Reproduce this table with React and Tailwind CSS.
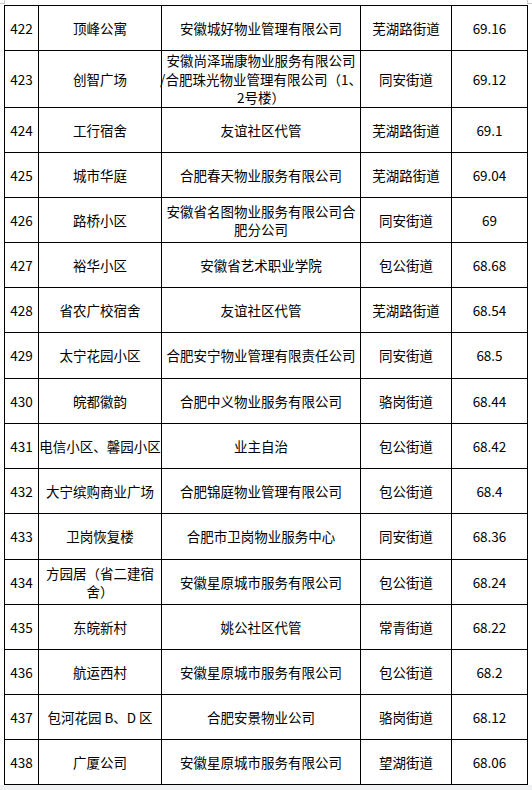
import React from "react";

const rows = [
  ["422", "顶峰公寓", "安徽城好物业管理有限公司", "芜湖路街道", "69.16"],
  ["423", "创智广场", ["安徽尚泽瑞康物业服务有限公司", "/合肥珠光物业管理有限公司（1、", "2号楼）"], "同安街道", "69.12"],
  ["424", "工行宿舍", "友谊社区代管", "芜湖路街道", "69.1"],
  ["425", "城市华庭", "合肥春天物业服务有限公司", "芜湖路街道", "69.04"],
  ["426", "路桥小区", ["安徽省名图物业服务有限公司合", "肥分公司"], "同安街道", "69"],
  ["427", "裕华小区", "安徽省艺术职业学院", "包公街道", "68.68"],
  ["428", "省农广校宿舍", "友谊社区代管", "芜湖路街道", "68.54"],
  ["429", "太宁花园小区", "合肥安宁物业管理有限责任公司", "同安街道", "68.5"],
  ["430", "皖都徽韵", "合肥中义物业服务有限公司", "骆岗街道", "68.44"],
  ["431", "电信小区、馨园小区", "业主自治", "包公街道", "68.42"],
  ["432", "大宁缤购商业广场", "合肥锦庭物业管理有限公司", "包公街道", "68.4"],
  ["433", "卫岗恢复楼", "合肥市卫岗物业服务中心", "同安街道", "68.36"],
  ["434", ["方园居（省二建宿", "舍）"], "安徽星原城市服务有限公司", "包公街道", "68.24"],
  ["435", "东皖新村", "姚公社区代管", "常青街道", "68.22"],
  ["436", "航运西村", "安徽星原城市服务有限公司", "包公街道", "68.2"],
  ["437", "包河花园 B、D 区", "合肥安景物业公司", "骆岗街道", "68.12"],
  ["438", "广厦公司", "安徽星原城市服务有限公司", "望湖街道", "68.06"],
];

const heights = {
  "423": "h-[57px]",
  "429": "h-[46px]",
  "433": "h-[46px]",
};

function Cell({ value }) {
  const lines = Array.isArray(value) ? value : [value];
  return (
    <div className="flex flex-col items-center justify-center text-center border-r border-black">
      {lines.map((l, i) => (
        <div key={i} className="whitespace-nowrap leading-[18.5px]">
          {l}
        </div>
      ))}
    </div>
  );
}

export default function App() {
  return (
    <div
      className="w-[532px] h-[790px] bg-white text-black text-[13.5px] flex flex-col"
      style={{ fontFamily: '"Noto Sans CJK SC", "Noto Sans", sans-serif' }}
    >
      <div className="h-[5px] flex justify-between items-start">
        <div className="w-[5px] h-[4px] border-r border-b border-[#c8c8c8]" />
        <div className="w-[5px] h-[4px] border-l border-b border-[#c8c8c8]" />
      </div>
      <div className="h-[780px] pl-[4px]">
        <div className="w-[524px] border-t border-l border-black flex flex-col">
          {rows.map((r) => (
            <div
              key={r[0]}
              className={`grid grid-cols-[34px_123px_199px_91px_76px] border-b border-black ${
                heights[r[0]] || "h-[45px]"
              }`}
            >
              {r.map((v, i) => (
                <Cell key={i} value={v} />
              ))}
            </div>
          ))}
        </div>
      </div>
      <div className="h-[5px] bg-[#f0f1f3]" />
    </div>
  );
}
